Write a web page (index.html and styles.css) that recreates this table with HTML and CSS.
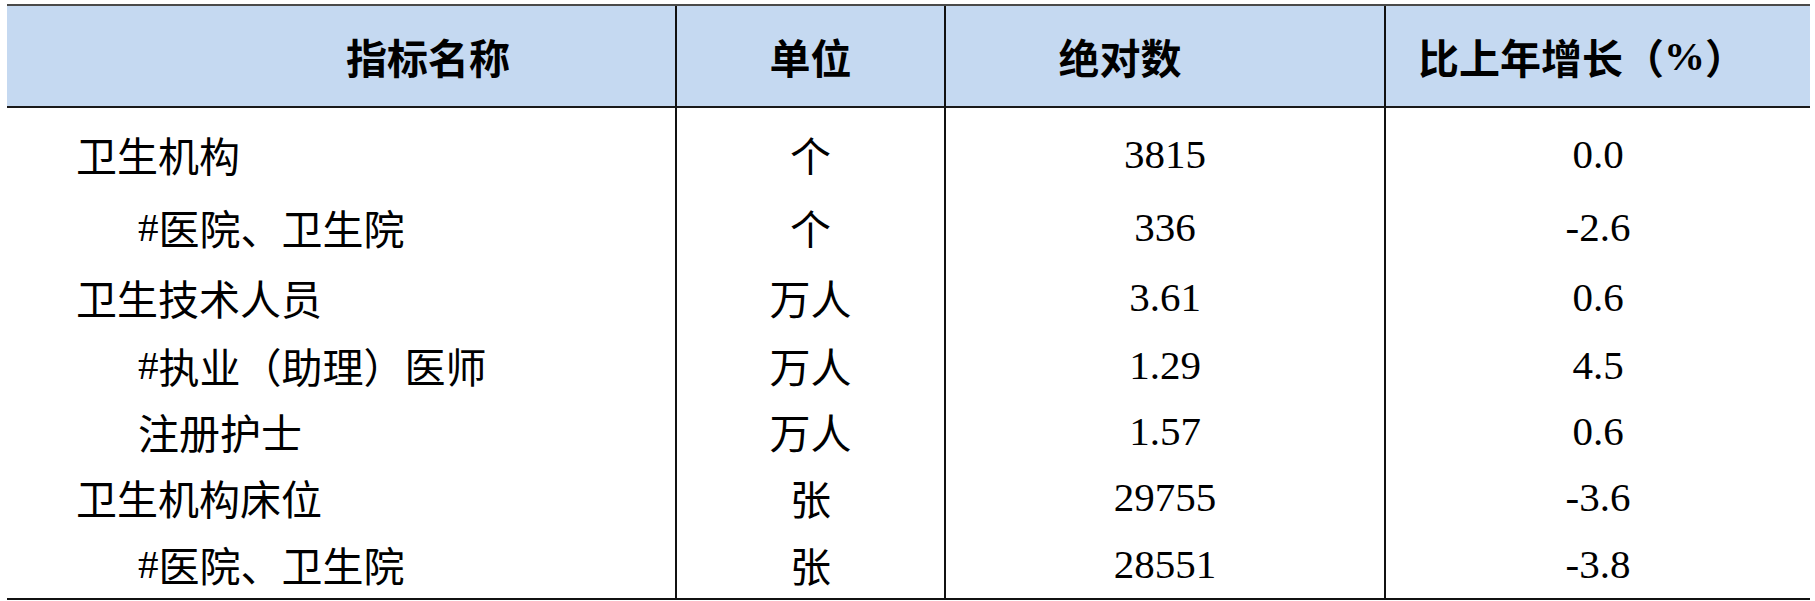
FILE: index.html
```html
<!DOCTYPE html>
<html lang="zh-CN">
<head>
<meta charset="utf-8">
<title>卫生指标</title>
<link rel="stylesheet" href="styles.css">
</head>
<body>
<div class="page">
  <div class="table">
    <div class="cell head c1">指标名称</div>
    <div class="cell head c2">单位</div>
    <div class="cell head c3">绝对数</div>
    <div class="cell head c4">比上年增长（<span class="lat">%</span>）</div>

    <div class="cell name r1">卫生机构</div>
    <div class="cell mid r1">个</div>
    <div class="cell mid r1 lat">3815</div>
    <div class="cell last r1 lat">0.0</div>

    <div class="cell name sub r2"><span class="lat">#</span>医院、卫生院</div>
    <div class="cell mid r2">个</div>
    <div class="cell mid r2 lat">336</div>
    <div class="cell last r2 lat">-2.6</div>

    <div class="cell name r3">卫生技术人员</div>
    <div class="cell mid r3">万人</div>
    <div class="cell mid r3 lat">3.61</div>
    <div class="cell last r3 lat">0.6</div>

    <div class="cell name sub r4"><span class="lat">#</span>执业（助理）医师</div>
    <div class="cell mid r4">万人</div>
    <div class="cell mid r4 lat">1.29</div>
    <div class="cell last r4 lat">4.5</div>

    <div class="cell name sub r5">注册护士</div>
    <div class="cell mid r5">万人</div>
    <div class="cell mid r5 lat">1.57</div>
    <div class="cell last r5 lat">0.6</div>

    <div class="cell name r6">卫生机构床位</div>
    <div class="cell mid r6">张</div>
    <div class="cell mid r6 lat">29755</div>
    <div class="cell last r6 lat">-3.6</div>

    <div class="cell name sub r7"><span class="lat">#</span>医院、卫生院</div>
    <div class="cell mid r7">张</div>
    <div class="cell mid r7 lat">28551</div>
    <div class="cell last r7 lat">-3.8</div>
  </div>
</div>
</body>
</html>
```

FILE: styles.css
```css
html, body {
  margin: 0;
  padding: 0;
  background: #ffffff;
}

.page {
  padding: 4px 0 0 7px;
}

.table {
  display: grid;
  grid-template-columns: 670px 269px 440px 424px;
  width: 1803px;
  border-top: 2px solid #4a4a4a;
  border-bottom: 2px solid #111111;
  font-family: "Noto Sans CJK SC", sans-serif;
  font-size: 41px;
  font-weight: 400;
  color: #000000;
  line-height: 1;
}

.lat {
  font-family: "Liberation Serif", "Times New Roman", serif;
  font-weight: 400;
}

.cell {
  box-sizing: border-box;
  display: flex;
  align-items: center;
  white-space: nowrap;
}

.head {
  height: 102px;
  background: #c5d9f1;
  border-bottom: 2px solid #1a1a1a;
  font-weight: 700;
  justify-content: center;
}

.head .lat {
  font-weight: 700;
}

.c1 { border-right: 2px solid #111; padding-left: 174px; }
.c2 { border-right: 2px solid #111; }
.c3 { border-right: 2px solid #111; padding-right: 90px; }
.c4 { padding-right: 32px; }

.name {
  border-right: 2px solid #111;
  padding-left: 69px;
}

.name.sub {
  padding-left: 131px;
}

.mid {
  border-right: 2px solid #111;
  justify-content: center;
}

.last {
  justify-content: center;
}

.r1 { height: 84px; padding-top: 8px; }
.r2 { height: 70px; }
.r3 { height: 70px; }
.r4 { height: 66px; }
.r5 { height: 67px; }
.r6 { height: 65px; }
.r7 { height: 68px; }
```
